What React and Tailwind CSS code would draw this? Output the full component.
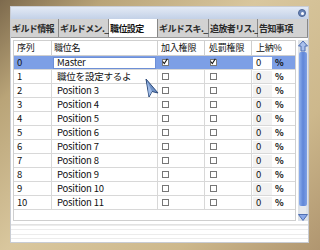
const rows = [
  { rank: 0, name: 'Master', join: true, punish: true },
  { rank: 1, name: '職位を設定するよ' },
  { rank: 2, name: 'Position 3' },
  { rank: 3, name: 'Position 4' },
  { rank: 4, name: 'Position 5' },
  { rank: 5, name: 'Position 6' },
  { rank: 6, name: 'Position 7' },
  { rank: 7, name: 'Position 8' },
  { rank: 8, name: 'Position 9' },
  { rank: 9, name: 'Position 10' },
  { rank: 10, name: 'Position 11' },
];

const tabs = [
  { label: 'ギルド情報', w: 'w-[48px]' },
  { label: 'ギルドメン._', w: 'w-[50px]' },
  { label: '職位設定', w: 'w-[49px]', active: true },
  { label: 'ギルドスキ._', w: 'w-[51px]' },
  { label: '追放者リス._', w: 'w-[49px]' },
  { label: '告知事項', w: 'w-[50px]' },
];

function Check({ on }) {
  return (
    <div className="w-[7px] h-[7px] border border-[#777] bg-white flex items-center justify-center">
      {on && (
        <svg width="9" height="9" viewBox="0 0 9 9" className="-mt-[3px] -ml-[1px]">
          <path d="M1 4.5 L3.5 7.5 L8 0.5" stroke="#111" strokeWidth="1.6" fill="none" />
        </svg>
      )}
    </div>
  );
}

export default function App() {
  return (
    <div
      className="relative w-[320px] h-[250px] overflow-hidden pt-[6px] pl-[10px] bg-[linear-gradient(135deg,#7d6a4d_0%,#b9a478_18%,#d9c79e_45%,#cdb88c_75%,#b09670_100%)]"
      style={{ fontFamily: '"Noto Sans CJK JP", "Liberation Sans", sans-serif' }}
    >
      <div className="w-[299px] h-[237px] bg-white flex flex-col border border-[#c8ccd4]">
        {/* title bar */}
        <div className="h-[12px] bg-gradient-to-b from-[#e3eaf5] to-[#c3d1e7] flex justify-end items-center pr-[2px]">
          <div className="w-[8px] h-[8px] rounded-full bg-[#6b86b8] border border-[#4b6494] flex items-center justify-center">
            <div className="w-[3px] h-[3px] rounded-full bg-white" />
          </div>
        </div>

        {/* tabs */}
        <div className="h-[19px] flex bg-[#cfcfcf] border-b border-[#9a9a9a]">
          {tabs.map((t) => (
            <div
              key={t.label}
              className={`${t.w} h-full flex items-center pl-[1px] text-[9px] font-semibold leading-none tracking-[-0.6px] whitespace-nowrap border-r border-[#888] ${
                t.active ? 'bg-white text-[#111]' : 'bg-[#d2d2d2] text-[#2a2a2a]'
              }`}
            >
              {t.label}
            </div>
          ))}
        </div>

        {/* content */}
        <div className="flex pl-[2px] pt-[2px]">
          <div className="w-[284px] border border-[#cfcfcf] text-[9.5px] tracking-[-0.2px] text-[#111]">
            <div className="flex h-[15px] items-center border-b border-[#cfcfcf] text-[9px]">
              <div className="w-[38px] pl-[3px] border-r border-[#cfcfcf] h-full flex items-center">序列</div>
              <div className="w-[106px] pl-[2px] border-r border-[#cfcfcf] h-full flex items-center">職位名</div>
              <div className="w-[47px] pl-[3px] border-r border-[#cfcfcf] h-full flex items-center">加入権限</div>
              <div className="w-[47px] pl-[4px] border-r border-[#cfcfcf] h-full flex items-center">処罰権限</div>
              <div className="flex-1 pl-[4px] h-full flex items-center">上納%</div>
            </div>
            {rows.map((r, i) => {
              const sel = i === 0;
              return (
                <div
                  key={r.rank}
                  className={`flex h-[14px] items-center border-b border-[#d8d8d8] ${sel ? 'bg-[#7d9fe6]' : 'bg-white'}`}
                >
                  <div className={`w-[38px] pl-[3px] h-full flex items-center border-r ${sel ? 'border-[#7d9fe6]' : 'border-[#d8d8d8]'}`}>
                    {r.rank}
                  </div>
                  <div className={`w-[106px] h-full flex items-center border-r ${sel ? 'border-[#7d9fe6] px-[1px]' : 'border-[#d8d8d8] pl-[5px]'}`}>
                    {sel ? (
                      <div className="w-full h-[12px] bg-white border border-[#6d8fd6] pl-[3px] flex items-center">{r.name}</div>
                    ) : (
                      r.name
                    )}
                  </div>
                  <div className={`w-[47px] pl-[4px] h-full flex items-center border-r ${sel ? 'border-[#7d9fe6]' : 'border-[#d8d8d8]'}`}>
                    <Check on={r.join} />
                  </div>
                  <div className={`w-[47px] pl-[5px] h-full flex items-center border-r ${sel ? 'border-[#7d9fe6]' : 'border-[#d8d8d8]'}`}>
                    <Check on={r.punish} />
                  </div>
                  <div className="flex-1 pl-[1px] h-full flex items-center gap-[3px]">
                    <div className={`w-[19px] h-[12px] pl-[3px] flex items-center ${sel ? 'bg-white' : 'bg-[#f2f2f2]'}`}>0</div>
                    <span className="font-bold text-[9px]">%</span>
                  </div>
                </div>
              );
            })}
          </div>

          {/* scrollbar */}
          <div className="ml-[2px] w-[10px] h-[181px] flex flex-col items-center bg-[#dde2e8]">
            <svg width="10" height="12" viewBox="0 0 10 12">
              <path d="M5 1 L9.5 6 L7 6 L7 11 L3 11 L3 6 L0.5 6 Z" fill="#a9c0ec" stroke="#4f6fb3" strokeWidth="1" />
            </svg>
            <div className="w-[8px] flex-1 bg-gradient-to-r from-[#8fb0ee] via-[#5f86d8] to-[#7e9fe4] rounded-[2px]" />
            <div className="w-[6px] h-[8px] bg-[#e6e9ee]" />
            <svg width="10" height="7" viewBox="0 0 10 7">
              <path d="M0.5 0.5 L9.5 0.5 L5 6.5 Z" fill="#8aa8e8" stroke="#4f6fb3" strokeWidth="1" />
            </svg>
          </div>
        </div>

        {/* lower area */}
        <div className="flex-1 flex flex-col justify-end pb-[3px]">
          <div className="h-[15px] flex flex-col justify-between border-t border-[#e2e2e2]">
            <div className="h-px bg-[#ececec]" />
            <div className="h-px bg-[#ececec]" />
            <div className="h-px bg-[#ececec]" />
            <div className="h-px bg-[#ececec]" />
          </div>
        </div>
      </div>

      {/* cursor */}
      <svg className="absolute left-[144px] top-[78px]" width="16" height="20" viewBox="0 0 16 20">
        <path d="M2 1 L14 15 L8 13.5 L5 19 Z" fill="#6f92c8" stroke="#2d4a7a" strokeWidth="1" />
        <path d="M3 3 L8 13.5 L5 18" fill="#9fbbe6" />
      </svg>
    </div>
  );
}
